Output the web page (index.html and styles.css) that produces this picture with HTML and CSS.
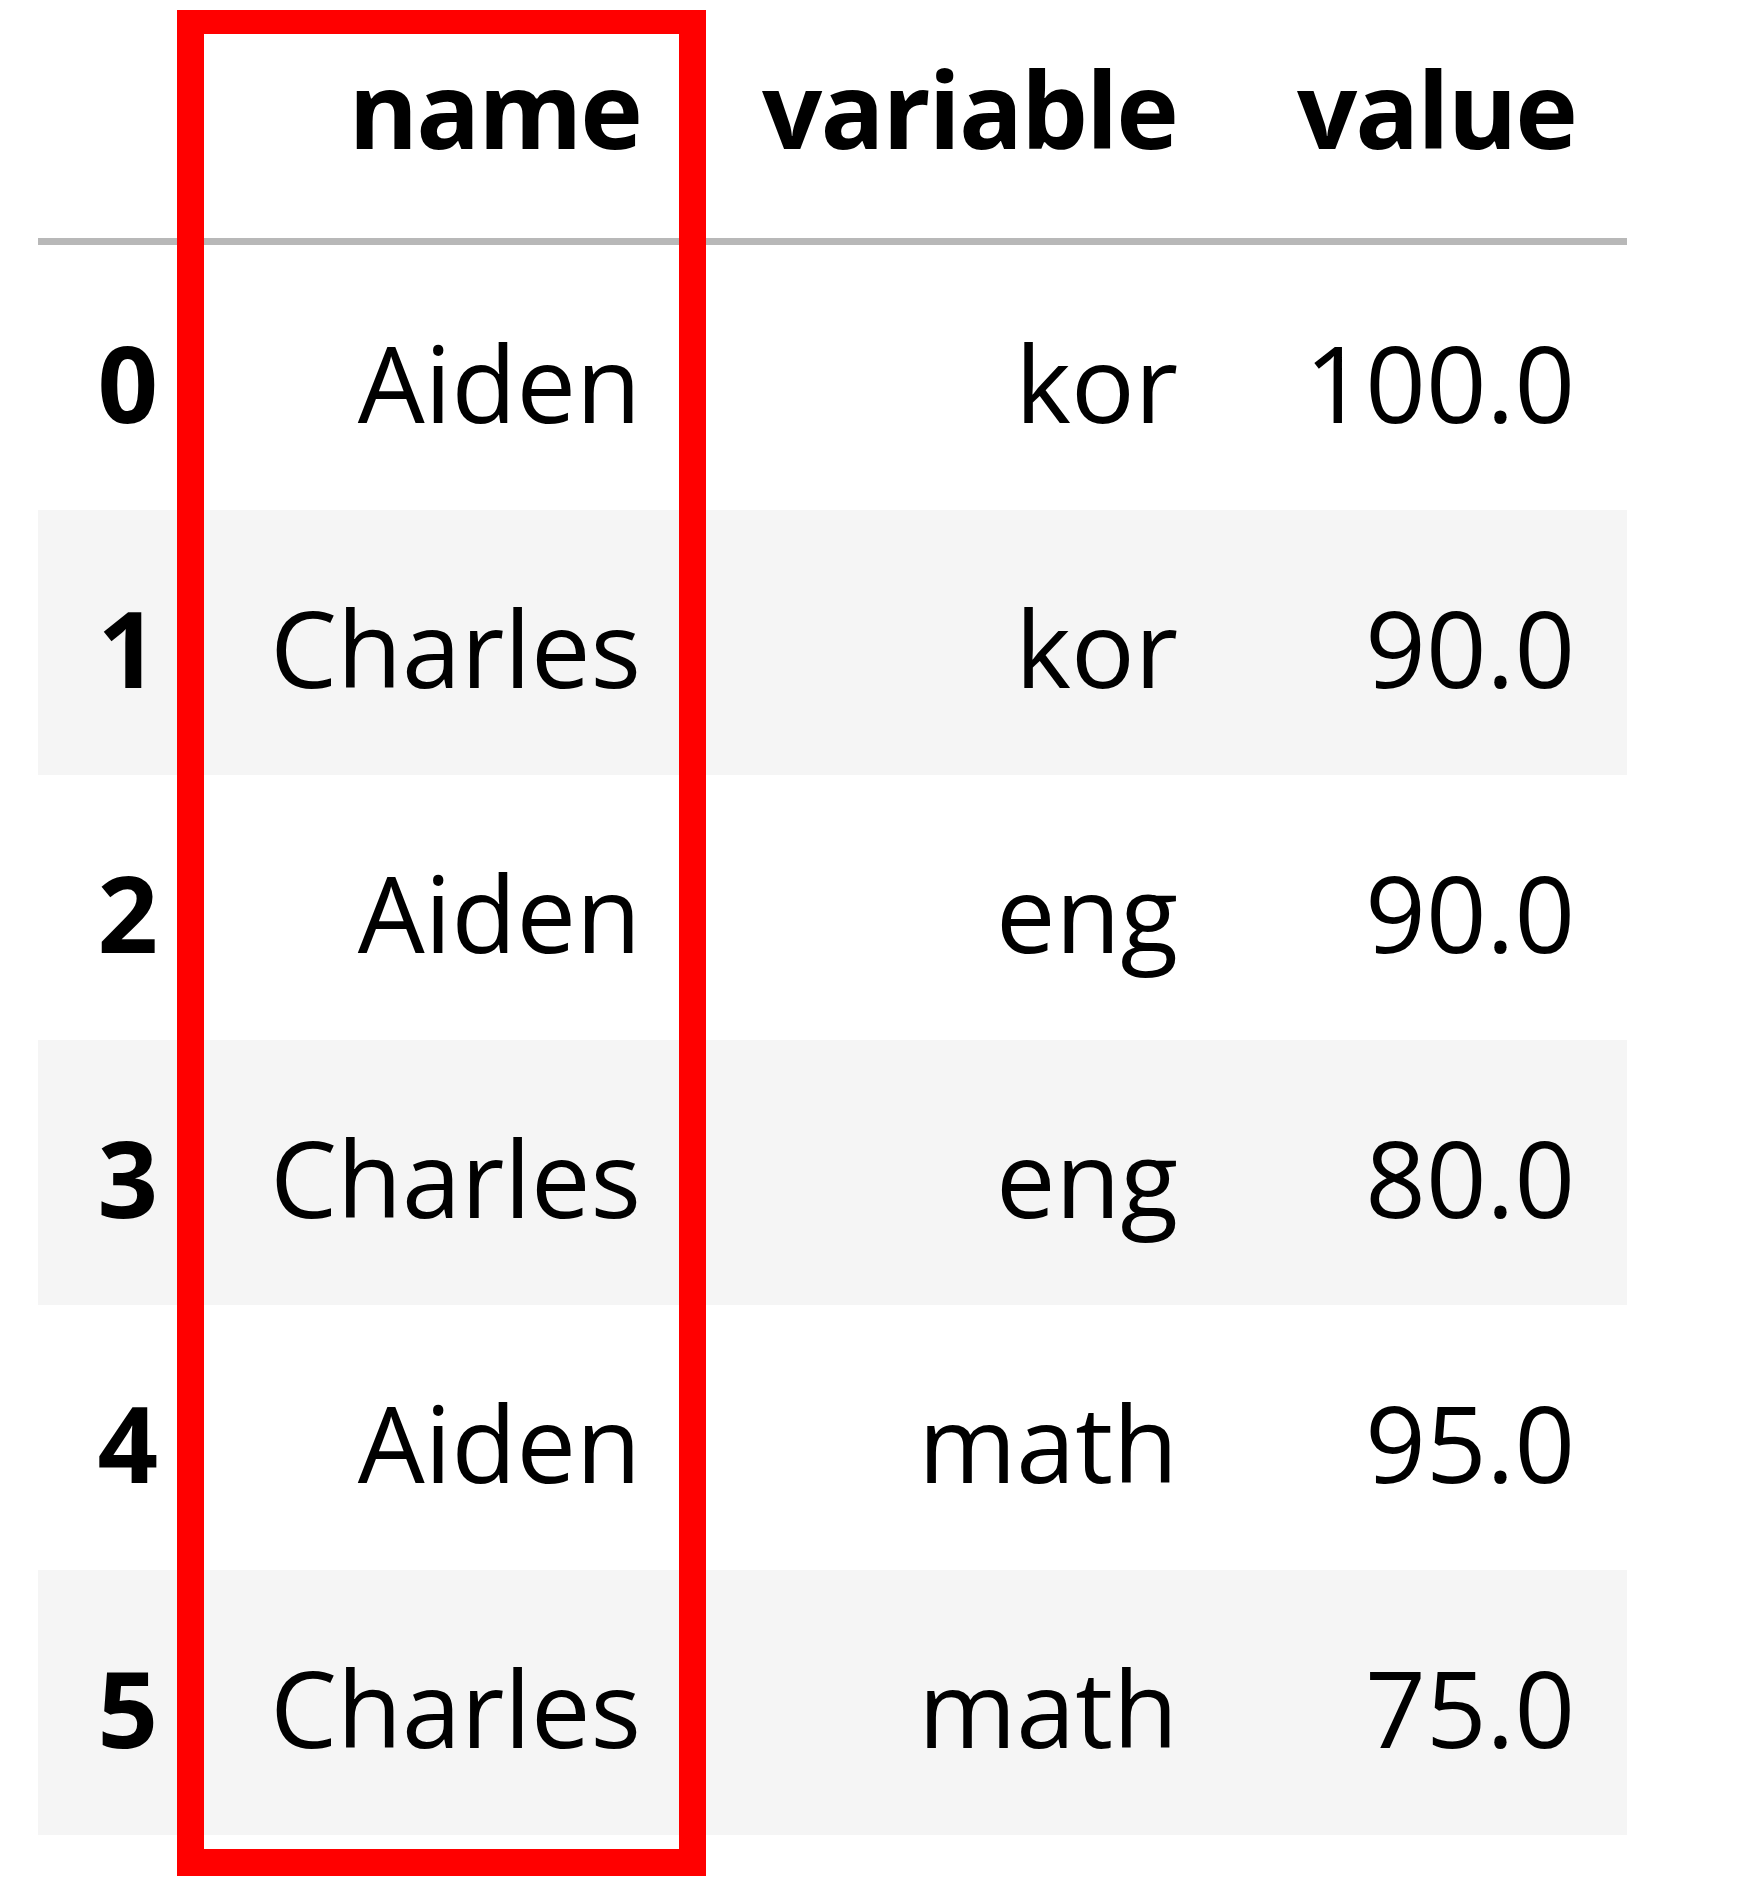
FILE: index.html
```html
<!DOCTYPE html>
<html>
<head>
<meta charset="utf-8">
<link rel="stylesheet" href="styles.css">
</head>
<body>
<div class="frame">
  <table class="df">
    <colgroup>
      <col class="c-idx"><col class="c-name"><col class="c-var"><col class="c-val">
    </colgroup>
    <thead>
      <tr><th></th><th>name</th><th>variable</th><th>value</th></tr>
    </thead>
    <tbody>
      <tr><th>0</th><td>Aiden</td><td>kor</td><td>100.0</td></tr>
      <tr><th>1</th><td>Charles</td><td>kor</td><td>90.0</td></tr>
      <tr><th>2</th><td>Aiden</td><td>eng</td><td>90.0</td></tr>
      <tr><th>3</th><td>Charles</td><td>eng</td><td>80.0</td></tr>
      <tr><th>4</th><td>Aiden</td><td>math</td><td>95.0</td></tr>
      <tr><th>5</th><td>Charles</td><td>math</td><td>75.0</td></tr>
    </tbody>
  </table>
  <div class="highlight"></div>
</div>
</body>
</html>
```
FILE: styles.css
```css
html, body {
  margin: 0;
  padding: 0;
  background: #ffffff;
}

.frame {
  position: relative;
  width: 1740px;
  height: 1891px;
}

.df {
  margin-left: 38px;
  border-collapse: collapse;
  border-spacing: 0;
  table-layout: fixed;
  width: 1589px;
  font-family: "Open Sans", "Noto Sans", sans-serif;
  font-size: 106px;
  color: #000000;
}

.c-idx { width: 180px; }
.c-name { width: 482px; }
.c-var { width: 530px; }
.c-val { width: 397px; }

.df th,
.df td {
  text-align: right;
  white-space: nowrap;
  line-height: 147px;
  padding: 64px 52px 54px 0;
}

.df th {
  font-weight: 700;
  letter-spacing: -2px;
}

.df td { font-weight: 400; }

.df td:nth-child(2) {
  padding-right: 59px;
}

.df thead th {
  padding: 35px 51px 56px 0;
}

.df thead th:nth-child(2) {
  padding-right: 59px;
}

.df thead th:nth-child(3) {
  padding-right: 53px;
}

.df thead tr {
  border-bottom: 7px solid #b8b8b8;
}

.df tbody tr:nth-child(even) {
  background: #f5f5f5;
}

.df tbody th:first-child {
  padding-right: 62px;
}

.highlight {
  position: absolute;
  left: 177px;
  top: 10px;
  width: 529px;
  height: 1866px;
  box-sizing: border-box;
  border: 27px solid #ff0000;
  border-top-width: 24px;
}
```
